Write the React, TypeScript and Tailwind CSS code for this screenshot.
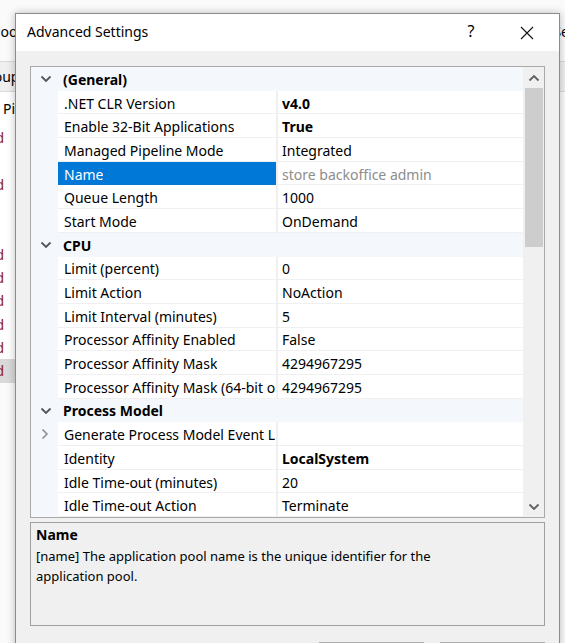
import React from "react";

type Row =
  | { kind: "cat"; label: string }
  | { kind: "prop"; label: string; value: string; bold?: boolean; selected?: boolean; expander?: boolean; readonly?: boolean };

const rows: Row[] = [
  { kind: "cat", label: "(General)" },
  { kind: "prop", label: ".NET CLR Version", value: "v4.0", bold: true },
  { kind: "prop", label: "Enable 32-Bit Applications", value: "True", bold: true },
  { kind: "prop", label: "Managed Pipeline Mode", value: "Integrated" },
  { kind: "prop", label: "Name", value: "store backoffice admin", selected: true, readonly: true },
  { kind: "prop", label: "Queue Length", value: "1000" },
  { kind: "prop", label: "Start Mode", value: "OnDemand" },
  { kind: "cat", label: "CPU" },
  { kind: "prop", label: "Limit (percent)", value: "0" },
  { kind: "prop", label: "Limit Action", value: "NoAction" },
  { kind: "prop", label: "Limit Interval (minutes)", value: "5" },
  { kind: "prop", label: "Processor Affinity Enabled", value: "False" },
  { kind: "prop", label: "Processor Affinity Mask", value: "4294967295" },
  { kind: "prop", label: "Processor Affinity Mask (64-bit option)", value: "4294967295" },
  { kind: "cat", label: "Process Model" },
  { kind: "prop", label: "Generate Process Model Event Log Entry", value: "", expander: true },
  { kind: "prop", label: "Identity", value: "LocalSystem", bold: true },
  { kind: "prop", label: "Idle Time-out (minutes)", value: "20" },
  { kind: "prop", label: "Idle Time-out Action", value: "Terminate" },
];

const ChevronDown = ({ className = "" }: { className?: string }) => (
  <svg width="12" height="8" viewBox="0 0 12 8" className={className}>
    <path d="M1.5 1.5 L6 6 L10.5 1.5" fill="none" stroke="currentColor" strokeWidth="1.8" />
  </svg>
);
const ChevronUp = ({ className = "" }: { className?: string }) => (
  <svg width="12" height="8" viewBox="0 0 12 8" className={className}>
    <path d="M1.5 6.5 L6 2 L10.5 6.5" fill="none" stroke="currentColor" strokeWidth="1.8" />
  </svg>
);
const ChevronRight = ({ className = "" }: { className?: string }) => (
  <svg width="8" height="12" viewBox="0 0 8 12" className={className}>
    <path d="M1.5 1.5 L6 6 L1.5 10.5" fill="none" stroke="currentColor" strokeWidth="1.5" />
  </svg>
);

function GridRow({ row }: { row: Row }) {
  if (row.kind === "cat") {
    return (
      <div className="flex h-[23.7px] items-center bg-[#f4f7fb] pt-[1px]">
        <div className="flex w-[27px] shrink-0 justify-center pl-[3px] text-[#555]">
          <ChevronDown />
        </div>
        <div className="pl-[5px] font-bold text-black">{row.label}</div>
      </div>
    );
  }
  return (
    <div className="flex h-[23.7px] items-stretch">
      <div className="flex w-[27px] shrink-0 items-center justify-center bg-[#f4f7fb] pl-[1px] text-[#8a8a8a]">
        {row.expander ? <ChevronRight /> : null}
      </div>
      <div
        className={
          row.selected
            ? "flex w-[218px] shrink-0 items-center overflow-hidden bg-[#0078d7] pl-[6px] pr-[1px] pt-[2px] text-white"
            : "flex w-[218px] shrink-0 items-center overflow-hidden border-b border-[#f0f0f0] bg-white pl-[6px] pr-[1px] pt-[2px] text-black"
        }
      >
        <span className="block min-w-0 overflow-hidden whitespace-nowrap">{row.label}</span>
      </div>
      <div className="w-[2px] shrink-0 bg-[#f0f0f0]" />
      <div
        className={
          "flex min-w-0 flex-1 items-center overflow-hidden whitespace-nowrap border-b border-[#f0f0f0] bg-white pl-[4px] pt-[2px] " +
          (row.readonly ? "text-[#8d8d8d] " : "text-black ") +
          (row.bold ? "font-bold" : "")
        }
      >
        {row.value}
      </div>
    </div>
  );
}

const Mark = ({ sel = false }: { sel?: boolean }) => (
  <div className={"flex h-[23.3px] w-[15px] items-center " + (sel ? "bg-[#d9d9d9]" : "")}>
    <span className="-ml-[20px] block w-[24px] text-right text-[#8b1a1a]">d</span>
  </div>
);
const Blank = () => <div className="h-[23.3px]" />;

export default function App() {
  return (
    <div
      className="relative h-[643px] w-[565px] overflow-hidden bg-[#fafafa] text-[14px]"
      style={{ fontFamily: '"Noto Sans", "Open Sans", sans-serif' }}
    >
      {/* background window */}
      <div className="flex h-full w-full flex-col pt-[20px]">
        <div className="flex h-[22px] items-center justify-between text-[14px] text-black">
          <span className="-ml-[8px]">Pool</span>
          <span className="-mr-[4px]">Se</span>
        </div>
        <div className="mt-[19px] flex h-[31px] items-center justify-between border-y border-[#d9d9d9] bg-[#efefef] text-[14px] text-black">
          <span className="-ml-[22px]">Group</span>
          <span></span>
        </div>
        <div className="flex w-[15px] flex-col bg-white pt-[5px] text-[14px] leading-[23.3px]">
          <div className="flex h-[23.3px] items-center">
            <span className="ml-[3px] text-black">Pi</span>
          </div>
          <div className="h-[6px]" />
          <Mark />
          <Blank />
          <Mark />
          <Blank />
          <Blank />
          <Mark />
          <Mark />
          <Mark />
          <Mark />
          <Mark />
          <Mark sel />
        </div>
      </div>

      {/* dialog */}
      <div className="absolute left-[15px] top-[13px] flex h-[640px] w-[545px] flex-col border border-[#8c8c8c] bg-[#f0f0f0] shadow-[0_0_8px_rgba(0,0,0,0.25)]">
        <div className="flex h-[37px] shrink-0 items-center bg-white pb-[3px]">
          <div className="pl-[11px] text-[14px] text-black">Advanced Settings</div>
          <div className="flex-1" />
          <div className="w-[20px] text-center text-[16px] text-black">?</div>
          <div className="w-[36px]" />
          <div className="mr-[22px] flex h-[20px] w-[20px] items-center justify-center pt-[3px]">
            <svg width="14" height="14" viewBox="0 0 14 14">
              <path d="M1 1 L13 13 M13 1 L1 13" stroke="#111" strokeWidth="1.1" fill="none" />
            </svg>
          </div>
        </div>

        <div className="flex flex-col px-[14px] pt-[15px]">
          {/* property grid */}
          <div className="flex h-[452px] border border-[#a9a9a9] bg-white">
            <div className="flex min-w-0 flex-1 flex-col overflow-hidden">
              {rows.map((r, i) => (
                <GridRow key={i} row={r} />
              ))}
            </div>
            <div className="flex w-[21px] shrink-0 flex-col items-center bg-[#f0f0f0]">
              <div className="flex h-[21px] items-center justify-center text-[#606060]">
                <ChevronUp />
              </div>
              <div className="h-[159px] w-[18px] bg-[#cdcdcd]" />
              <div className="flex-1" />
              <div className="flex h-[21px] items-center justify-center text-[#606060]">
                <ChevronDown />
              </div>
            </div>
          </div>

          {/* description */}
          <div className="mt-[4px] h-[104px] border border-[#a0a0a0] bg-[#f0f0f0] px-[5px] pt-[1px] text-black">
            <div className="text-[14px] font-bold leading-[22px]">Name</div>
            <div className="text-[13px] leading-[20px]">
              [name] The application pool name is the unique identifier for the
              <br />
              application pool.
            </div>
          </div>

          {/* buttons */}
          <div className="mt-[16px] flex justify-end gap-[16px]">
            <div className="h-[23px] w-[105px] border border-[#adadad] bg-[#e1e1e1]" />
            <div className="h-[23px] w-[105px] border border-[#adadad] bg-[#e1e1e1]" />
          </div>
        </div>
      </div>
    </div>
  );
}
